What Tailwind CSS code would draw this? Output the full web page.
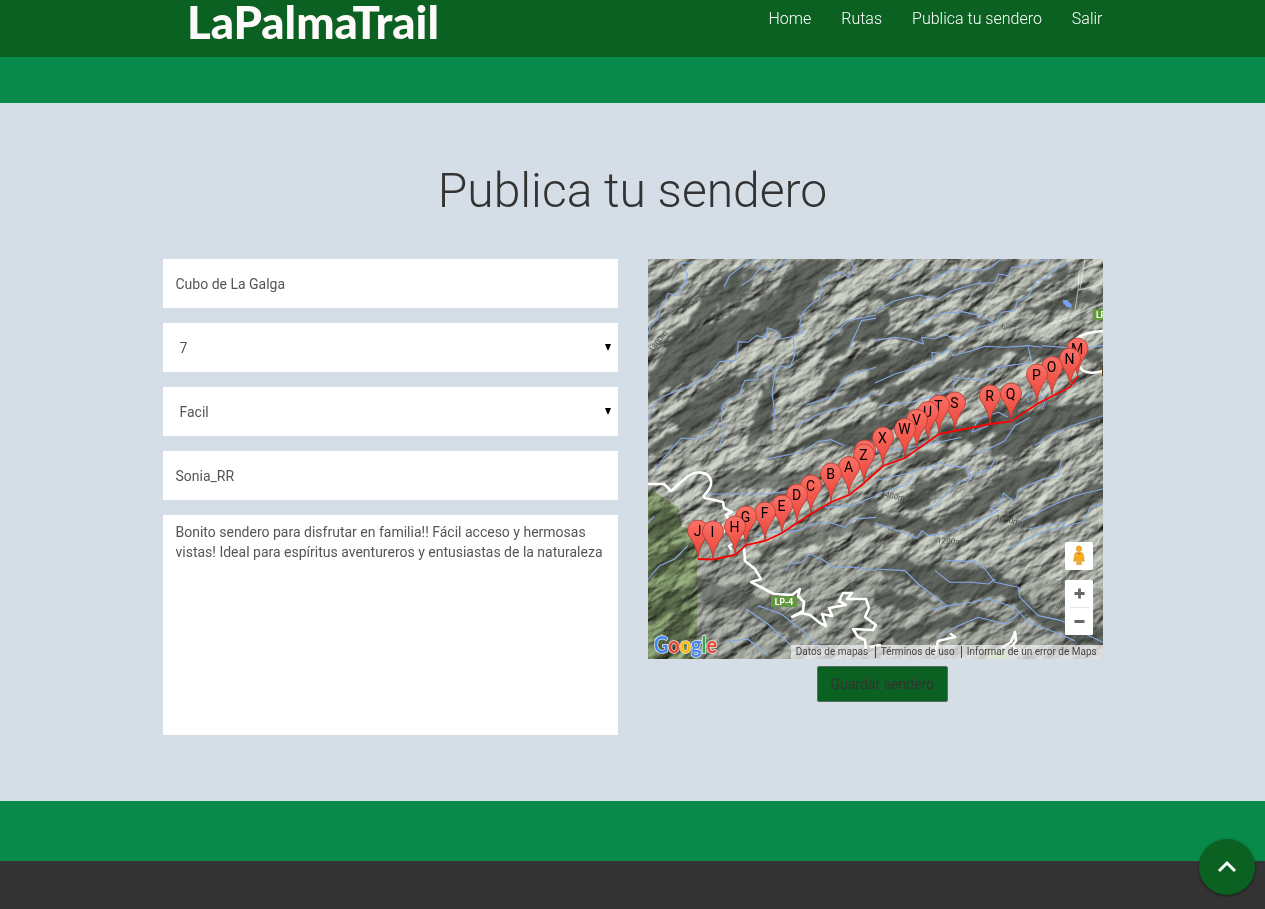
<!DOCTYPE html>
<html lang="es">
<head>
<meta charset="utf-8">
<title>LaPalmaTrail</title>
<script src="https://cdn.jsdelivr.net/npm/@tailwindcss/browser@4"></script>
</head>
<body class="h-[909px] overflow-hidden bg-[#d5dde6] font-[Roboto,sans-serif] text-sm leading-5 text-[#333]">
<header class="h-[57px] bg-[#0b6121]">
  <div class="mx-auto flex w-[940px] items-start justify-between">
    <svg class="ml-[22px] overflow-visible" width="262" height="50" role="img" aria-label="LaPalmaTrail"><text x="2" y="38.500" textLength="252" lengthAdjust="spacingAndGlyphs" font-family="Lato, sans-serif" font-weight="900" font-size="45" fill="#fffafa">LaPalmaTrail</text></svg>
    <nav class="flex gap-[30px] pt-[9px] text-base leading-5 font-light text-white"><a>Home</a><a>Rutas</a><a>Publica tu sendero</a><a>Salir</a></nav>
  </div>
</header>
<div class="h-[46px] bg-[#088a4b]"></div>
<main class="h-[698px] pt-[58px]">
  <h1 class="text-center text-[48px] leading-[60px] font-light">Publica tu sendero</h1>
  <div class="mx-auto mt-[38px] flex w-[940px] gap-[30px]">
    <form class="flex w-[455px] flex-col gap-[15px] text-[#555]">
      <div class="flex h-[49px] items-center bg-white px-[13px]">Cubo de La Galga</div>
      <div class="flex h-[49px] items-center justify-between bg-white pr-[7px] pl-[17px]"><span>7</span><svg width="6" height="6" class="-mt-0.5"><path d="M0 0H6L3.5 6h-1z" fill="#000"/></svg></div>
      <div class="flex h-[49px] items-center justify-between bg-white pr-[7px] pl-[17px]"><span>Facil</span><svg width="6" height="6" class="-mt-0.5"><path d="M0 0H6L3.5 6h-1z" fill="#000"/></svg></div>
      <div class="flex h-[49px] items-center bg-white px-[13px]">Sonia_RR</div>
      <div class="h-[220px] bg-white px-[13px] pt-[7px] whitespace-nowrap">Bonito sendero para disfrutar en familia!! Fácil acceso y hermosas<br>vistas! Ideal para espíritus aventureros y entusiastas de la naturaleza</div>
    </form>
    <section class="flex w-[455px] flex-col">
      <svg width="455" height="400" viewBox="0 0 455 400" font-family="Roboto, sans-serif" class="block">
        <defs>
          <filter id="relief" x="0" y="0" width="100%" height="100%" color-interpolation-filters="sRGB">
            <feTurbulence type="fractalNoise" baseFrequency=".03 .065" numOctaves="5" seed="8"/>
            <feColorMatrix values="0 0 0 0 0 0 0 0 0 0 0 0 0 0 0 1 0 0 0 0"/>
            <feDiffuseLighting surfaceScale="4.600" diffuseConstant="1.120" lighting-color="#c0c5bb"><feDistantLight azimuth="255" elevation="48"/></feDiffuseLighting>
          </filter>
          <filter id="rough" x="-5%" y="-5%" width="110%" height="110%" color-interpolation-filters="sRGB">
            <feTurbulence type="fractalNoise" baseFrequency=".03" numOctaves="2" seed="3"/>
            <feDisplacementMap in="SourceGraphic" scale="34" xChannelSelector="R" yChannelSelector="G"/>
            <feGaussianBlur stdDeviation="3.500"/>
          </filter>
          <linearGradient id="red" x2="0" y2="1"><stop stop-color="#fc7268"/><stop offset="1" stop-color="#e94034"/></linearGradient>
          <g id="pin"><path d="M0 0C-.9-8-2.2-11.500-6.200-18.200C-8.500-22-10.500-24-10.500-28A10.500 10.500 0 0 1 10.500-28C10.500-24 8.500-22 6.200-18.200C2.200-11.500.9-8 0 0Z" fill="url(#red)" stroke="#b5382f" stroke-width=".8"/></g>
        </defs>
        <rect width="455" height="400" fill="#a8ada4"/>
        <g transform="translate(-110 170) rotate(-32)"><rect x="-60" y="-120" width="760" height="660" filter="url(#relief)"/></g>
        <!-- shaded slopes -->
        <g transform="scale(.3333)" fill="#3c403b" opacity=".7" filter="url(#rough)">
          <path d="M0 105L110 65 95 100 50 120 0 195Z"/>
          <path d="M305 5L250 90 190 170 130 210 70 250 50 320 0 385V360L60 250 150 140 230 45Z"/>
          <path d="M60 250L190 190 310 150 380 90 430 20 480 0H600L520 60 500 130 460 160 450 225 420 240 360 210 340 240 270 260 240 300 190 340 60 390 0 430V370Z"/>
          <path d="M370 20L330 55 290 110 230 140 190 200 240 85 300 40Z"/>
          <path d="M0 560L100 510 60 480 150 400 225 360 330 340 280 400 220 440 210 480 140 530 0 590Z"/>
          <path d="M380 330L375 520 290 560 320 470 340 400Z"/>
          <path d="M720 150L600 190 540 250 520 310 600 270 720 210Z"/>
          <path d="M500 410L540 340 600 310 720 270V300L600 350 550 400Z"/>
          <path d="M450 490L540 440 610 390 720 340V370L600 430 540 460Z"/>
          <path d="M440 560L520 515 684 480 780 440V480L690 540 590 560 520 545 380 600H340Z"/>
        </g>
        <g transform="translate(227) scale(.3333)" fill="#3c403b" opacity=".7" filter="url(#rough)">
          <path d="M-20 100L90 100 190 95 270 70 380 10 450 0 380 55 300 80 200 120 130 115 50 145 -20 120Z"/>
          <path d="M580 10L500 70 410 140 350 190 290 160 190 190 110 220 -20 225V240L120 240 190 200 300 185 360 195 440 130 510 80 580 55Z"/>
          <path d="M-20 310L110 260 130 230 230 240 180 300 120 310 60 370 -20 400Z"/>
          <path d="M350 250L450 235 580 265 684 280V310L580 290 510 300 410 280 330 330 250 330 190 400 130 385 100 420 -20 430 -20 410 130 350 210 300Z"/>
          <path d="M190 500L300 490 400 430 480 410 400 500 300 550 190 550Z"/>
          <path d="M370 500L440 460 530 440 700 430V480L570 510 480 550 430 590 340 590Z"/>
          <path d="M700 110L610 140 550 150 490 160 430 150 530 130 600 90Z"/>
        </g>
        <g transform="translate(0 200) scale(.3333)" fill="#3c403b" opacity=".5" filter="url(#rough)">
          <path d="M160 90L280 30 400 40 540 30 510 70 400 90 270 80 210 120Z"/>
          <path d="M330 265L400 235 480 205 600 190 684 170V230L600 220 500 260 390 270 340 320Z"/>
          <path d="M150 360L290 390 410 460 460 540 390 520 280 450 150 430Z"/>
          <path d="M530 190L600 140 684 120V160L600 170Z"/>
          <path d="M0 160L60 140 100 180 60 230 0 260ZM0 310L60 260 130 240 110 290 0 370ZM0 450L60 400 145 380 100 440 0 500ZM20 560L80 480 145 460 120 530 60 590Z"/>
        </g>
        <g transform="translate(227 200) scale(.3333)" fill="#3c403b" opacity=".68" filter="url(#rough)">
          <path d="M-20 160L190 190 270 130 350 60 430 20 560 0 550 30 430 90 415 125 380 105 340 150 240 210 130 230 40 205 -20 190Z"/>
          <path d="M70 130L150 60 280 20 270 55 190 90 160 140 80 150Z"/>
          <path d="M60 20L130 -20 250 -30 220 -5 130 15Z"/>
          <path d="M80 300L200 320 350 330 420 370 440 430 360 410 290 420 220 440 130 375 -10 330Z"/>
          <path d="M700 60L600 100 540 130 430 190 360 230 470 200 570 180 700 110Z"/>
          <path d="M420 390L490 450 600 490 700 510V570L600 540 500 500 430 450Z"/>
          <path d="M0 390L190 430 80 450 0 440ZM40 520L290 450 400 490 290 490 180 520 60 560Z"/>
        </g>
        <path d="M49 270V400H455V330L300 300 200 290 90 300Z" fill="#50544e" opacity=".18"/>
        <!-- park area -->
        <path d="M0 231C12 233 18 243 30 248L34 268 49 270 49 400H0Z" fill="#a9c987" opacity=".8" style="mix-blend-mode:multiply"/>
        <!-- contours -->
        <g transform="translate(-60 160) rotate(-32)" fill="none" stroke="#454a43" stroke-width=".5" opacity=".35">
          <path d="M0 0q30 8 60-2t70 6 80-4 90 8 90-3 90 6M0 12q40-8 80 2t80-4 80 6 90-4 90 8M0 46q30 8 60-2t70 6 80-4 90 8 90-3 90 6M0 58q40-8 80 2t80-4 80 6 90-4 90 8M20 100q30 8 60-2t70 6 80-4 90 8 90-3 90 6M20 112q40-8 80 2t80-4 80 6 90-4 90 8M20 160q30 8 60-2t70 6 80-4 90 8 90-3 90 6M20 172q40-8 80 2t80-4 80 6 90-4 90 8M20 220q30 8 60-2t70 6 80-4 90 8 90-3 90 6M20 270q40-8 80 2t80-4 80 6 90-4 90 8M20 330q40-8 80 2t80-4 80 6 90-4 90 8"/>
        </g>
        <!-- streams -->
        <g fill="none" stroke="#86a9e8" stroke-width="3.300" stroke-linejoin="round">
          <g transform="scale(.3333)">
            <path d="M135 12L95 12 118 45 115 70 85 110 60 103 50 130 35 145 30 180 8 200 0 225"/>
            <path d="M325 0L285 20 245 50 228 85M420 0L375 35 340 22 310 60 280 80"/>
            <path d="M610 0L618 30 600 55 580 38 530 60 517 95 515 122 495 130 465 160 455 195 465 220 440 232 395 240 385 215 358 206 355 235 325 230 300 250 270 248 270 270 260 305 215 308 185 345 140 375 100 390 40 415 15 440 0 485"/>
            <path d="M435 235L440 290 425 325 395 320 380 335 360 322 330 340 330 360 290 365 275 405 225 435 220 480 228 520 210 575M210 480L195 510 150 540 100 537 45 600M383 335L372 400 380 460 374 515"/>
            <path d="M684 168L600 185 540 245M684 325L600 350 550 415 475 437M684 398L600 440 510 465 445 500M590 560L550 542 510 548 460 580 355 600M684 178L640 185 605 265"/>
          </g>
          <g transform="translate(227) scale(.3333)">
            <path d="M120 0L100 25 65 45 45 60M380 0L340 30 285 35 240 30 190 50 165 65M520 0L450 20 410 25 400 50 370 45 360 70 300 75 230 95 190 120 130 108 60 125 20 145 0 160"/>
            <path d="M580 10L535 35 510 60 485 65 460 110 425 130 420 155 380 160 360 192 320 170 260 158 190 165 130 195M360 192L310 205 250 240 210 228 180 240 140 235 145 255 100 240 60 235 0 245"/>
            <path d="M500 265L460 260 390 265 330 262 290 275 235 290 220 270 200 285 170 280 175 310 110 330 60 345 0 372M684 260L610 270 560 265 500 260"/>
            <path d="M460 265L470 310 400 320 340 330 330 365 240 355 235 390 180 410 110 430 20 440M465 475L420 500 390 545 340 570 295 585M400 475L370 460 310 480 290 520 340 500M684 470L590 500 520 530 480 560M0 580L110 565 190 550 260 535"/>
            <path d="M460 430L455 410 490 400 510 430 500 450M520 370L530 330 510 300"/>
          </g>
          <g transform="translate(0 200) scale(.3333)">
            <path d="M45 0L20 35M170 105L260 105 360 105 460 90M684 110L610 140 530 145M684 175L620 180 590 205 545 190 490 195 450 215 360 222 330 230"/>
            <path d="M415 335L425 315 460 310 485 285 520 300 560 325 620 325 684 335M0 360L35 320 80 300 120 260M0 190L20 172M295 450L360 495 430 560M330 440L400 465 470 520 520 570M230 550L300 540 360 590"/>
          </g>
          <g transform="translate(227 200) scale(.3333)">
            <path d="M0 65L110 40 165 20 180 30 190 10 220 20 275 25 290 60 250 70 180 140 150 150M0 108L100 75 115 50M290 50L345 30 360 0M0 192L70 215 125 238 140 215 160 230 230 220 255 205 310 185 370 155 345 150 380 130 385 102 420 130 430 95 490 65 550 50 560 0"/>
            <path d="M0 330L90 335 130 375 215 440M215 305L300 308 330 330 360 370 430 385 435 415 490 470 560 485 620 520 684 550M180 335L225 370 290 370 340 375 360 360M170 452L220 440 290 430 340 420 420 445 460 490 540 520 600 545M200 525L250 500 310 475 390 495 430 465"/>
            <path d="M395 272L440 250 500 220 560 205 570 190 460 210M684 135L645 145 630 185 570 205M440 185L520 145 600 110 684 90"/>
          </g>
        </g>
        <path d="M415 41l4 0 5 5-1 3-4-1-4-4z" fill="#73a3f3"/>
        <g font-size="8" fill="#41463f" opacity=".9"><text transform="translate(354 71) rotate(-16)">600m</text><text transform="translate(36 53) rotate(-38)">1600m</text><text transform="translate(5 94) rotate(-53)">1800m</text><text transform="translate(232 237) rotate(12)">1400m</text><text transform="translate(347 261) rotate(12)">1000m</text><text transform="translate(289 284) rotate(4)">1200m</text><text transform="translate(401 353) rotate(-20)">800m</text></g>
        <!-- roads -->
        <g fill="none" stroke="#fff" stroke-linejoin="round" stroke-linecap="round">
          <path stroke-width="2.600" d="M0 225L16 225 23 232 39 218C47 211 61 212 63 222C65 232 52 236 57 239L75 243 76 249 84 253 78 256 83 264 73 276M87 283L81 287 83 290M96 289L97 302 107 310 113 320 103 323 126 335 144 336 152 330 150 337 156 343 155 352 144 358 153 354 162 356 172 364 178 367 174 355 184 357 181 349 198 346 191 342 195 334 204 334 199 340 218 340 221 349 217 358 228 366 225 371 205 370 210 378 217 381 218 392"/>
          <path stroke-width="2.600" d="M287 395L290 382 307 378 303 375M355 388L363 383 367 373 368 382 364 387 369 392M223 388L232 386"/>
          <path stroke-width="2.500" d="M428 80Q436 73 455 72M431 107Q436 117 455 112"/>
          <path stroke-width=".7" opacity=".8" d="M455 0L431 12 430 31 427 51 422 58M431 31L455 25M455 44L425 57 403 65M437 0L432 30"/>
        </g>
        <rect x="123" y="337" width="26" height="11" fill="#62993e"/><text x="136" y="345.500" text-anchor="middle" font-size="8.500" font-weight="bold" fill="#fff">LP-4</text>
        <rect x="445" y="50" width="14" height="11" fill="#62993e"/><text x="448" y="58.500" font-size="8.500" font-weight="bold" fill="#fff">LP</text>
        <rect x="454" y="107" width="1" height="10" fill="#543a18"/>
        <rect x="340" y="391" width="20" height="9" fill="#9bbf80"/>
        <path d="M50 300L65 300.500 87 296 98 286 117 282 134 274 149 264 163 255 183 243 201 236 215 225 235 207 257 199 291 175 342 165 363 162.500 389 145 422 128 430 117" fill="none" stroke="#f00" stroke-width="1.800"/>
        <g id="pins" font-size="14" fill="#000" text-anchor="middle"></g>
        <!-- map logo -->
        <text x="6" y="394" font-family="Lato, sans-serif" font-size="22" textLength="63" lengthAdjust="spacingAndGlyphs" font-weight="700" stroke="#e8eae5" stroke-width="1.500" paint-order="stroke"><tspan fill="#4285f4">G</tspan><tspan fill="#ea4335">o</tspan><tspan fill="#fbbc05">o</tspan><tspan fill="#4285f4">g</tspan><tspan fill="#34a853">l</tspan><tspan fill="#ea4335">e</tspan></text>
        <!-- attribution -->
        <rect x="143" y="386" width="312" height="14" fill="#f5f5f5" opacity=".7"/>
        <g font-size="10" fill="#444"><text x="147.700" y="396" textLength="72.500">Datos de mapas</text><text x="232.700" y="396" textLength="74">Términos de uso</text><text x="318.700" y="396" textLength="130">Informar de un error de Maps</text></g>
        <path d="M227.500 387v12M313.500 387v12" stroke="#444"/>
        <!-- controls -->
        <rect x="417" y="283" width="28" height="28" rx="1.500" fill="#fff"/>
        <g fill="#fbb01b" stroke="#c78618" stroke-width=".5"><path d="M426.800 295.500q.2-2 2-2h4.400q1.800 0 2 2l1.200 6.500-1.500.6-1.200-3.100-.5 6.200h-1.700v-3.700h-1v3.700h-1.700l-.5-6.200-1.200 3.100-1.500-.6z"/><circle cx="431" cy="289.700" r="2.800"/></g><path d="M429 294h4l-2 2z" fill="#e46d2c"/>
        <rect x="417" y="321" width="28" height="55" rx="1.500" fill="#fff"/>
        <path d="M422 348.500h19" stroke="#e6e6e6"/>
        <path d="M426.500 334.500h10M431.500 329.500v10M426.500 362.500h10" stroke="#666" stroke-width="2.800"/>
      </svg>
      <button type="button" class="mt-[7px] ml-[169.5px] h-9 w-[131px] rounded-[2px] border border-[#5c6c64] bg-[#0b6121] text-sm text-[#333]">Guardar sendero</button>
    </section>
  </div>
</main>
<div class="h-[60px] bg-[#088a4b]"></div>
<footer class="h-12 bg-[#333]"></footer>
<div class="fixed right-[10px] bottom-[14px] flex size-14 items-center justify-center rounded-full bg-[#0b6121] shadow-[0_1px_3px_rgba(0,0,0,0.5)]">
  <svg width="20" height="14" viewBox="0 0 20 14" fill="none" stroke="#fff" stroke-width="3"><path d="M2 11l8-8 8 8"/></svg>
</div>
<script>
const pins = [['M',429.5,117.5],['N',422,127.5],['O',404,136],['P',389,143.5],['Q',363,162.5],['R',342,164.5],['S',307,171.5],['T',291,174.5],['U',280,181],['V',269,189],['W',257,198],['X',235,206.5],['',217,219.5],['Z',216,223.5],['A',201,236],['B',183,242.5],['C',163,254.5],['D',149,263.5],['E',134,274.5],['F',117,281.5],['G',98,285.5],['H',87,295.5],['I',65,300.5],['J',50,299.5]];
pins.sort((a, b) => a[2] - b[2]);
document.getElementById('pins').innerHTML = pins.map(([l, x, y]) => `<g transform="translate(${x} ${y})"><use href="#pin"/><text x="-.5" y="-22.700">${l}</text></g>`).join('');
</script>
</body>
</html>
